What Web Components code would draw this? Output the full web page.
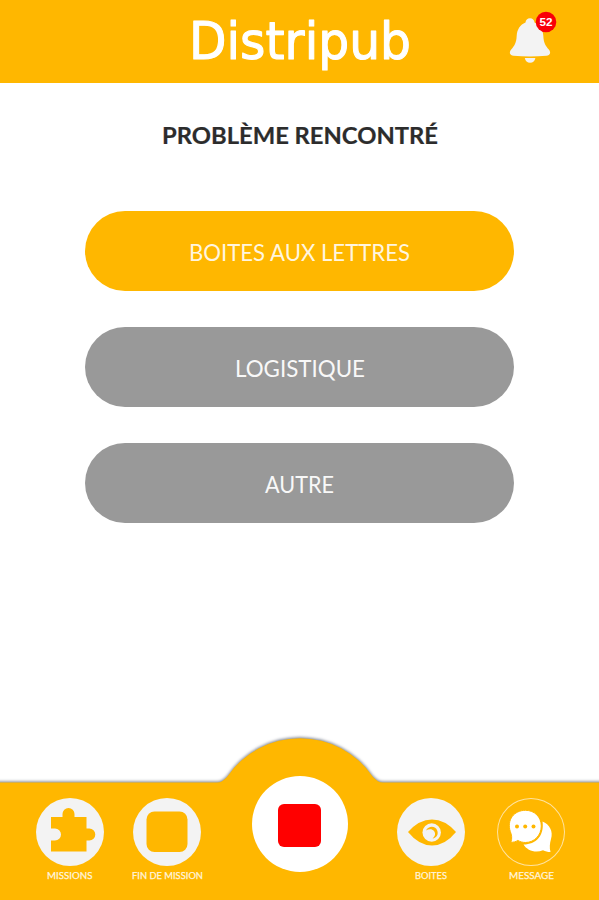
<!DOCTYPE html>
<html lang="fr">
<head>
<meta charset="utf-8">
<title>Distripub</title>
<style>
html,body{margin:0;height:100%;background:#fff}
body{overflow:hidden;font-family:Lato,"Liberation Sans",sans-serif}
</style>
</head>
<body>
<mission-app></mission-app>
<script>
const define=(name,html)=>customElements.define(name,class extends HTMLElement{
  constructor(){super();this.attachShadow({mode:'open'}).innerHTML=html;}
});

// One line of text set to an exact width; the element's height is the cap height.
customElements.define('fit-text',class extends HTMLElement{
  connectedCallback(){
    const w=this.getAttribute('width'),h=this.getAttribute('cap'),s=this.getAttribute('size');
    this.attachShadow({mode:'open'}).innerHTML=`<style>
      :host{display:block;width:${w}px;height:${h}px;flex:none}
      svg{display:block;overflow:visible}
      text{fill:currentColor;font-size:${s}px;stroke:currentColor;stroke-width:var(--text-stroke,0);stroke-linejoin:round}
    </style><svg width="${w}" height="${h}"><text y="${h}" textLength="${w}" lengthAdjust="spacingAndGlyphs"></text></svg>`;
    this.shadowRoot.querySelector('text').textContent=this.getAttribute('text');
  }
});

define('notification-bell',`<style>
  :host{display:block;width:50px;height:56px}
  svg{display:block}
  text{font:900 10.5px "Liberation Sans",sans-serif;fill:#fff}
</style>
<svg width="50" height="56" viewBox="507 10 50 56">
  <path fill="#f3f3f3" d="M530 18.300c2.600 0 4.300 1.700 4.500 4.100 5.300 2.200 8.500 7 8.800 13.300.3 7.300 2.300 10 5.500 13.800 2.400 2.900 1.500 5.800-2.300 6.300-11 1-22 1-33 0-3.800-.5-4.700-3.400-2.300-6.300 3.200-3.800 5.200-6.500 5.500-13.800.3-6.300 3.500-11.100 8.800-13.300.2-2.400 1.900-4.100 4.500-4.100Z"/>
  <path fill="#f3f3f3" d="M524.800 58h10.600c-.5 3-2.500 4.700-5.300 4.700s-4.800-1.700-5.300-4.700Z"/>
  <circle cx="546" cy="22" r="10.300" fill="#f90008"/>
  <text x="539.600" y="26.300" textLength="13" lengthAdjust="spacingAndGlyphs">52</text>
</svg>`);

define('app-header',`<style>
  :host{display:grid;grid-template-columns:189px 1fr 93px;height:83px;background:#ffb700;color:#fff}
  fit-text{grid-column:2;margin-top:19.500px;font-family:"DejaVu Sans",sans-serif;font-weight:400;--text-stroke:1.1px}
  notification-bell{margin-top:10px;margin-left:1px}
</style>
<fit-text text="Distripub" width="222" cap="38.5" size="52"></fit-text>
<notification-bell></notification-bell>`);

define('choice-button',`<style>
  :host{display:flex;justify-content:center;box-sizing:border-box;width:429.500px;height:80px;padding-top:33px;border-radius:40px;background:#999;color:#f8f8f8}
  :host([selected]){background:#ffb700;color:#fff5df}
</style><slot></slot>`);

define('nav-item',`<style>
  :host{display:flex;flex-direction:column;align-items:center;color:#fff4dc;padding-top:16px}
  .disc{display:block;width:68px;height:68px;box-sizing:border-box;border-radius:50%;background:#f3f3f3}
  :host([outline]) .disc{background:none;box-shadow:inset 0 0 0 1px #ffe3a0}
  ::slotted(svg){display:block}
  .label{margin-top:6px}
</style><div class="disc"><slot></slot></div><div class="label"><slot name="label"></slot></div>`);

define('stop-button',`<style>
  :host{display:flex;align-items:center;justify-content:center;width:96px;height:96px;border-radius:50%;background:#fff;justify-self:center;margin-top:-6px}
  div{width:43px;height:43px;border-radius:6px;background:#f00;margin:2px 1px 0 0}
</style><div></div>`);

define('bottom-nav',`<style>
  :host{display:grid;grid-template-columns:98px 96px 170px 92px 108px;padding-left:21px;height:118px;position:relative;align-items:start}
  .back{position:absolute;left:0;bottom:0;z-index:-1;overflow:visible;filter:drop-shadow(0 -1px 1.500px rgba(40,50,70,.6))}
  fit-text{font-weight:400;--text-stroke:.25px}
</style>
<svg class="back" width="599" height="162" viewBox="0 738 599 162"><path fill="#ffb700" d="M-10 782.500H217Q222 782.500 227 777A88 88 0 0 1 373 777Q378 782.500 383 782.500H609V910H-10Z"/></svg>
<nav-item>
  <svg width="68" height="68" viewBox="36 798 68 68"><path fill="#ffb700" d="M51 817H62.500V814A6 6 0 0 1 74.500 814V817H86.500V828.500H89.300A6 6 0 0 1 89.300 840.500H86.500V851.500H51V840.500H55A6 6 0 0 0 55 828.500H51Z"/></svg>
  <fit-text slot="label" text="MISSIONS" width="45.5" cap="6.5" size="9"></fit-text>
</nav-item>
<nav-item>
  <svg width="68" height="68" viewBox="133 798 68 68"><rect x="146.500" y="811.500" width="41" height="40.500" rx="8" fill="#ffb700"/></svg>
  <fit-text slot="label" text="FIN DE MISSION" width="71" cap="6.5" size="9"></fit-text>
</nav-item>
<stop-button></stop-button>
<nav-item>
  <svg width="68" height="68" viewBox="397 798 68 68"><path fill="#ffb700" d="M408 832Q419 819.500 432 819.500T456 832Q445 845.500 432 845.500T408 832Z"/><circle cx="431.700" cy="832.500" r="9.200" fill="#f3f3f3"/><path fill="#ffb700" d="M426 830.500C428.500 825.500 435.500 825.500 437.200 830.500C438.700 834.500 436.500 838 432.500 838.500C435 836.500 436 833.500 434 831C432 828.700 428.500 829 426 830.500Z"/></svg>
  <fit-text slot="label" text="BOITES" width="32" cap="6.5" size="9"></fit-text>
</nav-item>
<nav-item outline>
  <svg width="68" height="68" viewBox="497 798 68 68"><path fill="#fff" d="M542.500 821.500C549.500 824 553.500 831.500 551 839C549.800 843 549.300 848 550.500 852C547.500 852 545.500 851.300 543 850.200C535.500 853.500 527 850.500 523.500 844.500C536 844.500 544.500 835.500 542.500 821.500Z"/><path fill="#fff" stroke="#ffb700" stroke-width="1" d="M525.500 810.300C534.500 810.300 541.300 817 541.300 826C541.300 835 534.500 842.500 525.500 842.500C522.500 842.500 520 841.700 517.800 840.400C515.800 841.800 513.500 842.300 510.800 842.300C512.500 838.500 511.500 834.500 510.300 831.500C506.500 820 514 810.300 525.500 810.300Z"/><g fill="#ffb700"><circle cx="517" cy="826.500" r="2"/><circle cx="525.200" cy="826.500" r="2"/><circle cx="533.500" cy="826.500" r="2"/></g></svg>
  <fit-text slot="label" text="MESSAGE" width="45" cap="6.5" size="9"></fit-text>
</nav-item>`);

define('mission-app',`<style>
  :host{display:flex;flex-direction:column;width:599px;height:900px;position:relative;z-index:0}
  main{flex:1;display:flex;flex-direction:column;align-items:center}
  .title{margin:43.500px 0 68px;color:#2c2c2c;font-weight:700;--text-stroke:.2px}
  .choices{display:flex;flex-direction:column;gap:36.200px}
</style>
<app-header></app-header>
<main>
  <fit-text class="title" text="PROBLÈME RENCONTRÉ" width="276" cap="16.5" size="23"></fit-text>
  <div class="choices">
    <choice-button selected><fit-text text="BOITES AUX LETTRES" width="221" cap="17" size="23.5"></fit-text></choice-button>
    <choice-button><fit-text text="LOGISTIQUE" width="130" cap="17" size="23.5"></fit-text></choice-button>
    <choice-button><fit-text text="AUTRE" width="69" cap="17" size="23.5"></fit-text></choice-button>
  </div>
</main>
<bottom-nav></bottom-nav>`);
</script>
</body>
</html>
